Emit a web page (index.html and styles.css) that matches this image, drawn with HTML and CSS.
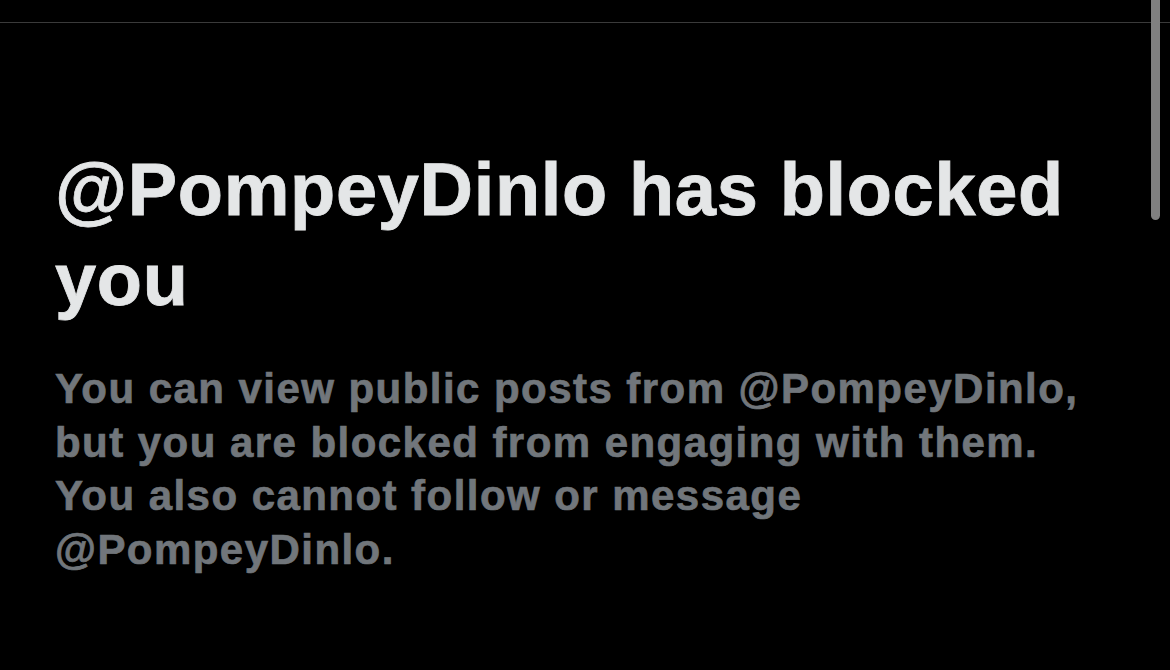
FILE: index.html
```html
<!DOCTYPE html>
<html>
<head>
<meta charset="utf-8">
<link rel="stylesheet" href="styles.css">
</head>
<body>
<div class="topbar"></div>
<main class="content">
  <h1 class="title">@PompeyDinlo has blocked you</h1>
  <p class="desc">You can view public posts from @PompeyDinlo, but you are blocked from engaging with them. You also cannot follow or message @PompeyDinlo.</p>
</main>
<div class="scrollbar"></div>
</body>
</html>
```
FILE: styles.css
```css
html, body {
  margin: 0;
  padding: 0;
  background: #000;
  height: 100%;
  overflow: hidden;
}
body {
  font-family: "Liberation Sans", Arial, sans-serif;
  position: relative;
}
.topbar {
  height: 22px;
  border-bottom: 1px solid #3a3a3a;
}
.content {
  padding: 122px 0 0 55px;
  width: 1060px;
}
.title {
  margin: 0;
  color: #e4e6e7;
  font-size: 74px;
  line-height: 90px;
  font-weight: 700;
  letter-spacing: 0.65px;
  -webkit-text-stroke: 0.8px #e4e6e7;
}
.desc {
  margin: 37px 0 0;
  color: #71767b;
  font-size: 42px;
  line-height: 53.5px;
  font-weight: 700;
  letter-spacing: 1.45px;
  -webkit-text-stroke: 0.7px #71767b;
}
.scrollbar {
  position: absolute;
  top: 0;
  right: 10px;
  width: 9px;
  height: 220px;
  background: #808080;
  border-radius: 0 0 5px 5px;
}
```
